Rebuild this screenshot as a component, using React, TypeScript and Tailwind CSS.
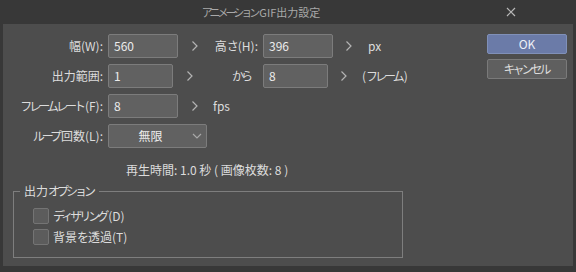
import React from "react";

// narrow kana, the reference font sets katakana/hiragana tighter than kanji
const K = ({ children }: { children: React.ReactNode }) => (
  <span className="tracking-[-3px] mr-[2px]">{children}</span>
);

const Chevron = () => (
  <svg width="8" height="12" viewBox="0 0 8 12" className="block">
    <polyline points="1.5,1.5 6,6 1.5,10.5" fill="none" stroke="#b4b4b4" strokeWidth="1.2" />
  </svg>
);

const Field = ({ value, width }: { value: string; width: string }) => (
  <div
    className={`${width} h-[24px] flex items-center pl-[5px] bg-[#616161] border border-[#7c7c7c] rounded-[2px] text-[#ececec]`}
  >
    {value}
  </div>
);

const Check = ({ label }: { label: React.ReactNode }) => (
  <div className="flex items-center h-[16px]">
    <div className="w-[16px] h-[16px] bg-[#5c5c5c] border border-[#747474] rounded-[2px]" />
    <span className="ml-[4px]">{label}</span>
  </div>
);

export default function App() {
  return (
    <div
      className="w-[576px] h-[272px] bg-[#383838] flex flex-col px-[3px] pb-[6px] text-[12px] text-[#dcdcdc] leading-[16px] whitespace-nowrap"
      style={{ fontFamily: '"Noto Sans CJK JP", "Noto Sans", sans-serif' }}
    >
      {/* title bar */}
      <div className="h-[24px] flex items-center shrink-0">
        <div className="flex-1 text-center pl-[13px] text-[#a9a9a9] text-[11px]">
          <K>アニメーション</K>GIF出力設定
        </div>
        <svg width="10" height="10" viewBox="0 0 10 10" className="mr-[57px]">
          <path d="M1 1 L9 9 M9 1 L1 9" stroke="#b8b8b8" strokeWidth="1.2" />
        </svg>
      </div>

      {/* body */}
      <div className="flex-1 bg-[#4d4d4d] flex">
        <div className="flex-1 flex flex-col pt-[10px]">
          <div className="flex flex-col gap-[6px]">
            {/* row 1 */}
            <div className="flex items-center h-[24px]">
              <div className="w-[100px] text-right">幅(W):</div>
              <div className="ml-[5px]">
                <Field value="560" width="w-[70px]" />
              </div>
              <div className="w-[34px] flex justify-center">
                <Chevron />
              </div>
              <div className="w-[46px] text-right">
                高<K>さ</K>(H):
              </div>
              <div className="ml-[5px]">
                <Field value="396" width="w-[70px]" />
              </div>
              <div className="w-[32px] flex justify-center">
                <Chevron />
              </div>
              <span className="ml-[3px]">px</span>
            </div>
            {/* row 2 */}
            <div className="flex items-center h-[24px]">
              <div className="w-[100px] text-right">出力範囲:</div>
              <div className="ml-[5px]">
                <Field value="1" width="w-[65px]" />
              </div>
              <div className="w-[34px] flex justify-center">
                <Chevron />
              </div>
              <div className="w-[51px] text-right pr-[6px]">
                <K>から</K>
              </div>
              <div className="ml-[5px]">
                <Field value="8" width="w-[65px]" />
              </div>
              <div className="w-[32px] flex justify-center">
                <Chevron />
              </div>
              <span className="ml-[2px]">
                (<K>フレーム</K>)
              </span>
            </div>
            {/* row 3 */}
            <div className="flex items-center h-[24px]">
              <div className="w-[100px] text-right">
                <K>フレームレート</K>(F):
              </div>
              <div className="ml-[5px]">
                <Field value="8" width="w-[70px]" />
              </div>
              <div className="w-[34px] flex justify-center">
                <Chevron />
              </div>
              <span className="ml-[1px]">fps</span>
            </div>
            {/* row 4 */}
            <div className="flex items-center h-[24px]">
              <div className="w-[100px] text-right">
                <K>ループ</K>回数(L):
              </div>
              <div className="ml-[5px] w-[99px] h-[24px] bg-[#616161] border border-[#7c7c7c] rounded-[2px] flex items-center">
                <span className="flex-1 text-center text-[#ececec]">無限</span>
                <svg width="10" height="6" viewBox="0 0 10 6" className="mr-[4px]">
                  <polyline points="1,1 5,5 9,1" fill="none" stroke="#a8a8a8" strokeWidth="1.2" />
                </svg>
              </div>
            </div>
          </div>

          <div className="mt-[14px] pl-[123px]">再生時間: 1.0 秒 ( 画像枚数: 8 )</div>

          <fieldset className="ml-[10px] mt-[5px] w-[390px] h-[75px] border border-[#7e7e7e]">
            <legend className="ml-[6px] px-[4px]">
              出力<K>オプション</K>
            </legend>
            <div className="flex flex-col gap-[5px] pl-[19px] pt-[9px]">
              <Check
                label={
                  <>
                    <K>ディザリング</K>(D)
                  </>
                }
              />
              <Check
                label={
                  <>
                    背景<K>を</K>透過(T)
                  </>
                }
              />
            </div>
          </fieldset>
        </div>

        <div className="w-[86px] flex flex-col pt-[10px] gap-[5px]">
          <div className="w-[80px] h-[20px] bg-[#6b7ba8] border border-[#8090b8] rounded-[2px] flex items-center justify-center text-[#eef0f6]">
            OK
          </div>
          <div className="w-[80px] h-[20px] bg-[#5f5f5f] border border-[#7a7a7a] rounded-[2px] flex items-center justify-center">
            <K>キャンセル</K>
          </div>
        </div>
      </div>
    </div>
  );
}
